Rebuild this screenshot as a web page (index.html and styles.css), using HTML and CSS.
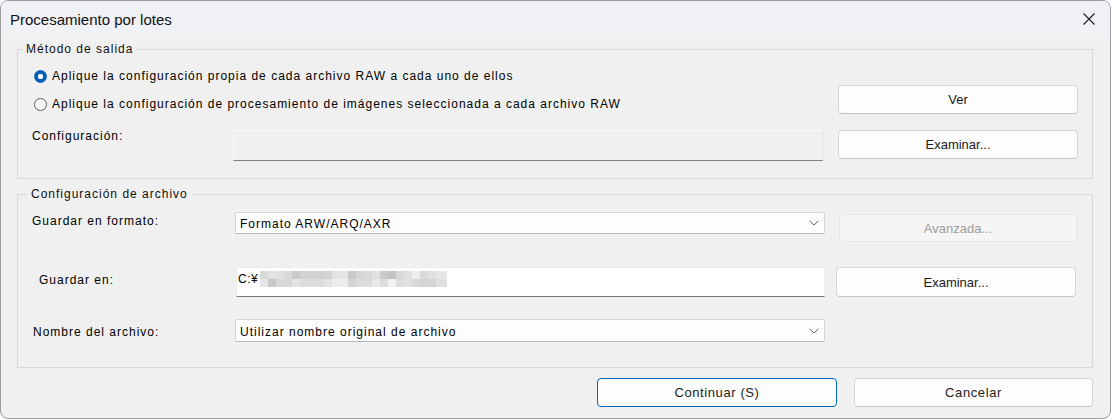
FILE: index.html
```html
<!DOCTYPE html>
<html lang="es">
<head>
<meta charset="utf-8">
<title>Procesamiento por lotes</title>
<link rel="stylesheet" href="styles.css">
</head>
<body>
<div class="window">
  <div class="titlebar">
    <span class="title">Procesamiento por lotes</span>
    <button class="close" aria-label="Cerrar">
      <svg width="12" height="12" viewBox="0 0 12 12"><path d="M0.5 0.5 L11.5 11.5 M11.5 0.5 L0.5 11.5" stroke="#1a1a1a" stroke-width="1.1" fill="none"/></svg>
    </button>
  </div>
  <div class="content">
    <fieldset class="group g1">
      <legend>Método de salida</legend>
      <div class="g1-body">
        <div class="g1-left">
          <label class="radio"><span class="dot checked"></span>Aplique la configuración propia de cada archivo RAW a cada uno de ellos</label>
          <label class="radio second"><span class="dot"></span>Aplique la configuración de procesamiento de imágenes seleccionada a cada archivo RAW</label>
          <div class="config-row">
            <span class="lbl">Configuración:</span>
            <div class="field readonly"></div>
          </div>
        </div>
        <div class="g1-right">
          <button class="btn">Ver</button>
          <button class="btn">Examinar...</button>
        </div>
      </div>
    </fieldset>

    <fieldset class="group g2">
      <legend>Configuración de archivo</legend>
      <div class="frow row-a">
        <span class="lbl lbl-a">Guardar en formato:</span>
        <div class="select h22">
          <span class="sel-text">Formato ARW/ARQ/AXR</span>
          <svg class="chev" width="10" height="6" viewBox="0 0 10 6"><path d="M0.5 0.8 L5 5 L9.5 0.8" stroke="#606060" stroke-width="1" fill="none"/></svg>
        </div>
        <button class="btn side disabled">Avanzada...</button>
      </div>
      <div class="frow row-b">
        <span class="lbl lbl-b">Guardar en:</span>
        <div class="field path">
          <span class="path-text">C:¥</span>
          <svg class="mosaic" width="187" height="16" viewBox="0 0 187 16">
            <g>
              <rect x="0" y="0" width="9" height="8" fill="#dadada"/>
              <rect x="8" y="0" width="9" height="8" fill="#e2e2e2"/>
              <rect x="16" y="0" width="9" height="8" fill="#e0e0e0"/>
              <rect x="24" y="0" width="9" height="8" fill="#d9d9d9"/>
              <rect x="32" y="0" width="9" height="8" fill="#c9c9c9"/>
              <rect x="40" y="0" width="9" height="8" fill="#d2d2d2"/>
              <rect x="48" y="0" width="9" height="8" fill="#d0d0d0"/>
              <rect x="56" y="0" width="9" height="8" fill="#d1d1d1"/>
              <rect x="64" y="0" width="9" height="8" fill="#d3d3d3"/>
              <rect x="72" y="0" width="9" height="8" fill="#e3e3e3"/>
              <rect x="80" y="0" width="9" height="8" fill="#e5e5e5"/>
              <rect x="88" y="0" width="9" height="8" fill="#c8c8c8"/>
              <rect x="96" y="0" width="9" height="8" fill="#d5d5d5"/>
              <rect x="104" y="0" width="9" height="8" fill="#d9d9d9"/>
              <rect x="112" y="0" width="9" height="8" fill="#e1e1e1"/>
              <rect x="120" y="0" width="9" height="8" fill="#c9c9c9"/>
              <rect x="128" y="0" width="9" height="8" fill="#c3c3c3"/>
              <rect x="136" y="0" width="9" height="8" fill="#d8d8d8"/>
              <rect x="144" y="0" width="9" height="8" fill="#e0e0e0"/>
              <rect x="152" y="0" width="9" height="8" fill="#ededed"/>
              <rect x="160" y="0" width="9" height="8" fill="#d8d8d8"/>
              <rect x="168" y="0" width="9" height="8" fill="#e1e1e1"/>
              <rect x="176" y="0" width="11" height="8" fill="#e5e5e5"/>
              <rect x="0" y="8" width="9" height="8" fill="#e5e5e5"/>
              <rect x="8" y="8" width="9" height="8" fill="#c8c8c8"/>
              <rect x="16" y="8" width="9" height="8" fill="#d9d9d9"/>
              <rect x="24" y="8" width="9" height="8" fill="#d7d7d7"/>
              <rect x="32" y="8" width="9" height="8" fill="#e5e5e5"/>
              <rect x="40" y="8" width="9" height="8" fill="#dcdcdc"/>
              <rect x="48" y="8" width="9" height="8" fill="#dddddd"/>
              <rect x="56" y="8" width="9" height="8" fill="#dbdbdb"/>
              <rect x="64" y="8" width="9" height="8" fill="#e4e4e4"/>
              <rect x="72" y="8" width="9" height="8" fill="#eeeeee"/>
              <rect x="80" y="8" width="9" height="8" fill="#ececec"/>
              <rect x="88" y="8" width="9" height="8" fill="#d4d4d4"/>
              <rect x="96" y="8" width="9" height="8" fill="#dddddd"/>
              <rect x="104" y="8" width="9" height="8" fill="#dbdbdb"/>
              <rect x="112" y="8" width="9" height="8" fill="#e8e8e8"/>
              <rect x="120" y="8" width="9" height="8" fill="#dcdcdc"/>
              <rect x="128" y="8" width="9" height="8" fill="#f1f1f1"/>
              <rect x="136" y="8" width="9" height="8" fill="#dcdcdc"/>
              <rect x="144" y="8" width="9" height="8" fill="#e1e1e1"/>
              <rect x="152" y="8" width="9" height="8" fill="#d8d8d8"/>
              <rect x="160" y="8" width="9" height="8" fill="#d4d4d4"/>
              <rect x="168" y="8" width="9" height="8" fill="#d5d5d5"/>
              <rect x="176" y="8" width="11" height="8" fill="#e0e0e0"/>
            </g>
          </svg>
        </div>
        <button class="btn side browse">Examinar...</button>
      </div>
      <div class="frow row-c">
        <span class="lbl lbl-c">Nombre del archivo:</span>
        <div class="select h23">
          <span class="sel-text">Utilizar nombre original de archivo</span>
          <svg class="chev" width="10" height="6" viewBox="0 0 10 6"><path d="M0.5 0.8 L5 5 L9.5 0.8" stroke="#606060" stroke-width="1" fill="none"/></svg>
        </div>
      </div>
    </fieldset>

    <div class="footer">
      <button class="btn foot primary">Continuar (S)</button>
      <button class="btn foot cancel">Cancelar</button>
    </div>
  </div>
</div>
</body>
</html>
```

FILE: styles.css
```css
* {
  box-sizing: border-box;
}

html, body {
  margin: 0;
  padding: 0;
  background: #ffffff;
}

.window {
  width: 1111px;
  height: 419px;
  border: 1px solid #9c9c9c;
  border-radius: 8px;
  background: #f0f0f0;
  overflow: hidden;
  display: flex;
  flex-direction: column;
  font-family: "Liberation Sans", Arial, sans-serif;
  font-size: 12px;
  letter-spacing: 1px;
  color: #000000;
}

/* Title bar */
.titlebar {
  height: 36px;
  flex: none;
  display: flex;
  align-items: center;
  justify-content: space-between;
  padding-left: 9px;
  background: #eff1f5;
}

.title {
  font-size: 15px;
  letter-spacing: 0;
  color: #111111;
  margin-top: 1px;
}

.close {
  width: 43px;
  height: 36px;
  border: 0;
  padding: 0;
  background: transparent;
  display: flex;
  align-items: center;
  justify-content: center;
  margin-top: -1px;
}

/* Content */
.content {
  flex: 1;
  display: flex;
  flex-direction: column;
  padding: 4px 17px 0 16px;
}

.group {
  margin: 0;
  border: 1px solid #d9d9d9;
  min-width: 0;
}

.group legend {
  font-size: 12px;
  line-height: 16px;
  padding: 0 3px;
  color: #111111;
}

.g1 {
  padding: 9px 15px 17px 14px;
}

.g1 legend {
  margin-left: -9px;
}

.g2 {
  margin-top: 7px;
  padding: 10px 15px 25px 14px;
}

.g2 legend {
  margin-left: -5px;
  padding: 0 4px 0 4px;
}

/* Group 1 */
.g1-body {
  display: flex;
}

.g1-left {
  flex: 1;
  display: flex;
  flex-direction: column;
}

.radio {
  display: flex;
  align-items: center;
  height: 20px;
  line-height: 16px;
  white-space: nowrap;
}

.radio.second {
  margin-top: 8px;
}

.dot {
  width: 13px;
  height: 13px;
  flex: none;
  border-radius: 50%;
  border: 1px solid #5c5c5c;
  background: #f6f6f6;
  margin-left: 2px;
  margin-right: 5px;
}

.dot.checked {
  border-color: #005fb8;
  background: radial-gradient(circle, #ffffff 0 2.4px, #005fb8 3px);
}

.config-row {
  display: flex;
  margin-top: 16px;
}

.lbl {
  line-height: 16px;
  white-space: nowrap;
}

.config-row .lbl {
  width: 201px;
  flex: none;
  margin-top: -2px;
}

.field {
  width: 590px;
  flex: none;
}

.field.readonly {
  height: 31px;
  background: #f0f0f0;
  border: 1px solid #f9f9f9;
  border-right-color: #e2e2e2;
  border-bottom-color: #808080;
}

.g1-right {
  width: 240px;
  flex: none;
  margin-left: 15px;
  padding-top: 19px;
  display: flex;
  flex-direction: column;
  gap: 16px;
}

.g1-right .btn {
  height: 29px;
}

/* Buttons */
.btn {
  font-family: "Liberation Sans", Arial, sans-serif;
  font-size: 13px;
  letter-spacing: 0;
  color: #1b1b1b;
  background: #fdfdfd;
  border: 1px solid #d6d6d6;
  border-bottom-color: #c3c3c3;
  border-radius: 4px;
  padding: 0;
  display: flex;
  align-items: center;
  justify-content: center;
  width: 240px;
}

.btn.disabled {
  background: #f5f5f5;
  border-color: #e6e6e6;
  color: #9d9d9d;
}

.btn.foot {
  height: 29px;
  letter-spacing: 0.6px;
}

.btn.primary {
  border: 1px solid #0067c0;
}

.btn.cancel {
  width: 239px;
}

/* Group 2 rows */
.frow {
  display: flex;
  align-items: flex-start;
}

.frow .lbl {
  width: 203px;
  flex: none;
}

.row-a {
  height: 30px;
}

.lbl-a {
  margin-top: 1px;
}

.row-b {
  height: 30px;
  margin-top: 25px;
}

.lbl-b {
  margin-top: 5px;
  padding-left: 7px;
}

.row-c {
  height: 23px;
  margin-top: 22px;
}

.lbl-c {
  margin-top: 5px;
  padding-left: 1px;
}

.select {
  width: 590px;
  flex: none;
  display: flex;
  align-items: center;
  justify-content: space-between;
  background: #fdfdfd;
  border: 1px solid #d3d3d3;
  border-bottom-color: #b9b9b9;
  border-radius: 2px;
  padding: 2px 5px 0 4px;
  line-height: 16px;
}

.select.h22 {
  height: 22px;
}

.select.h23 {
  height: 23px;
}

.sel-text {
  white-space: nowrap;
}

.chev {
  margin-top: -2px;
}

.side {
  margin-left: 12px;
}

.row-a .side {
  height: 28px;
  margin-top: 2px;
  margin-left: 14px;
  width: 238px;
}

.row-b .side {
  height: 30px;
  margin-left: 11px;
}

.field.path {
  height: 30px;
  margin-left: 1px;
  width: 589px;
  background: #ffffff;
  border: 1px solid #ececec;
  border-bottom-color: #7a7a7a;
  display: flex;
  align-items: flex-start;
  padding: 3px 0 0 1px;
}

.path-text {
  line-height: 16px;
  letter-spacing: 0.5px;
}

.mosaic {
  display: block;
  margin-left: 2px;
}

/* Footer */
.footer {
  display: flex;
  justify-content: flex-end;
  gap: 17px;
  margin-top: 10px;
}
```
